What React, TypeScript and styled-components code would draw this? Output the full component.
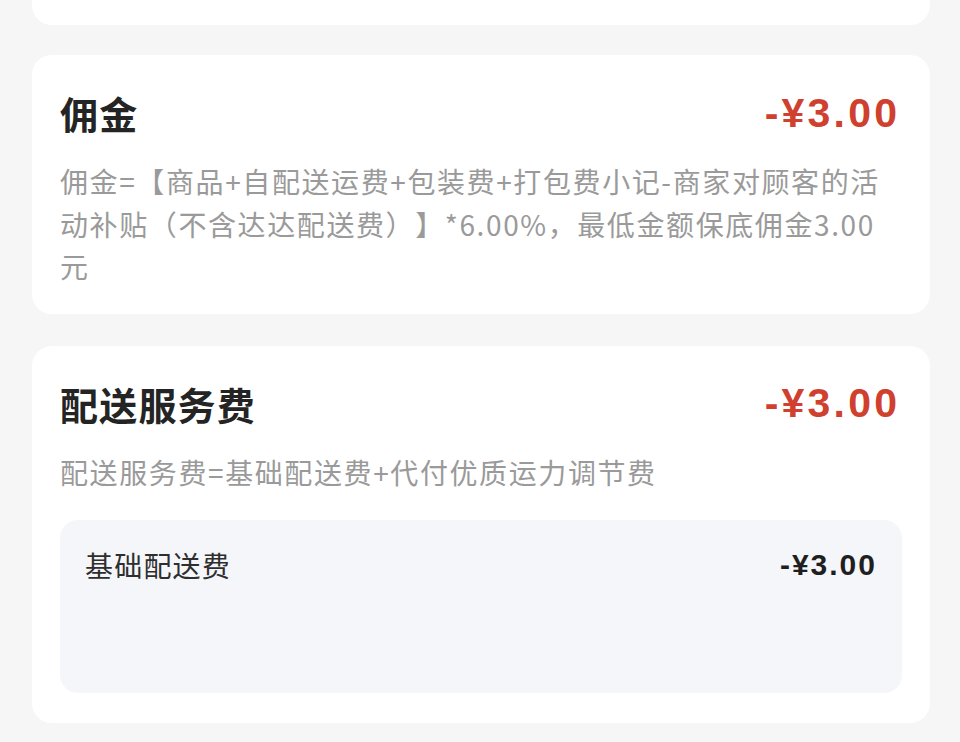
import React from "react";
import styled, { createGlobalStyle } from "styled-components";

const Global = createGlobalStyle`
  html, body {
    margin: 0;
    padding: 0;
    background: #f6f6f7;
  }
  body {
    font-family: "Noto Sans CJK SC", "Noto Sans", sans-serif;
    -webkit-font-smoothing: antialiased;
    text-spacing-trim: space-all;
  }
`;

const Page = styled.div`
  display: flex;
  flex-direction: column;
  gap: 30px;
  padding: 0 30px 0 32px;
  height: 742px;
  overflow: hidden;
  box-sizing: border-box;
`;

const TopStub = styled.div`
  height: 25px;
  background: #ffffff;
  border-radius: 0 0 20px 20px;
`;

const Card = styled.section<{ $bottom?: number; $top?: number }>`
  background: #ffffff;
  border-radius: 20px;
  margin-top: ${(p) => p.$top ?? 0}px;
  padding: 31px 28px ${(p) => p.$bottom ?? 26}px 28px;
  display: flex;
  flex-direction: column;
`;

const HeadRow = styled.div`
  display: flex;
  justify-content: space-between;
  align-items: center;
  height: 54px;
`;

const Title = styled.h2`
  margin: 0;
  font-size: 38px;
  font-weight: 700;
  letter-spacing: 1.2px;
  color: #242424;
  line-height: 54px;
`;

const Amount = styled.span<{ $small?: boolean }>`
  font-family: "Liberation Sans", Arial, sans-serif;
  font-weight: 700;
  font-size: ${(p) => (p.$small ? 30 : 41)}px;
  letter-spacing: ${(p) => (p.$small ? 2 : 3.2)}px;
  color: ${(p) => (p.$small ? "#1f1f1f" : "#d0402f")};
  line-height: 1;
  margin-right: ${(p) => (p.$small ? -2 : 1.8)}px;
`;

const Desc = styled.p`
  margin: 20px 0 0;
  padding-right: 7px;
  font-size: 28px;
  line-height: 42.5px;
  letter-spacing: 1.6px;
  color: #9a9a9a;
  text-spacing-trim: space-all;
`;

const SubBox = styled.div`
  margin-top: 27px;
  background: #f5f6fa;
  border-radius: 18px;
  min-height: 173px;
  padding: 24px 27px 0 25px;
  box-sizing: border-box;
`;

const SubRow = styled.div`
  display: flex;
  justify-content: space-between;
  align-items: center;
  height: 42px;
`;

const SubLabel = styled.span`
  font-size: 28px;
  letter-spacing: 1.2px;
  color: #2e2e2e;
`;

export default function App() {
  return (
    <>
      <Global />
      <Page>
        <TopStub />
        <Card>
          <HeadRow>
            <Title>佣金</Title>
            <Amount>-¥3.00</Amount>
          </HeadRow>
          <Desc>
            佣金=【商品+自配送运费+包装费+打包费小记-商家对顾客的活动补贴（不含达达配送费）】*6.00%，最低金额保底佣金3.00元
          </Desc>
        </Card>
        <Card $top={2} $bottom={30}>
          <HeadRow>
            <Title>配送服务费</Title>
            <Amount>-¥3.00</Amount>
          </HeadRow>
          <Desc>配送服务费=基础配送费+代付优质运力调节费</Desc>
          <SubBox>
            <SubRow>
              <SubLabel>基础配送费</SubLabel>
              <Amount $small>-¥3.00</Amount>
            </SubRow>
          </SubBox>
        </Card>
      </Page>
    </>
  );
}
